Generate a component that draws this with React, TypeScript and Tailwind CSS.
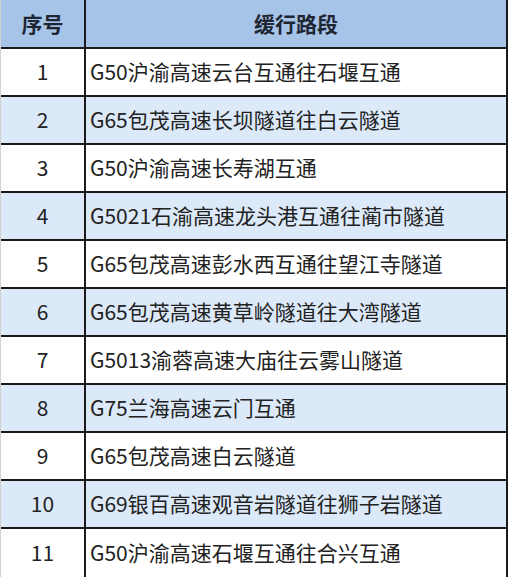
import React from 'react'

const rows = [
  'G50沪渝高速云台互通往石堰互通',
  'G65包茂高速长坝隧道往白云隧道',
  'G50沪渝高速长寿湖互通',
  'G5021石渝高速龙头港互通往蔺市隧道',
  'G65包茂高速彭水西互通往望江寺隧道',
  'G65包茂高速黄草岭隧道往大湾隧道',
  'G5013渝蓉高速大庙往云雾山隧道',
  'G75兰海高速云门互通',
  'G65包茂高速白云隧道',
  'G69银百高速观音岩隧道往狮子岩隧道',
  'G50沪渝高速石堰互通往合兴互通',
]

export default function App() {
  return (
    <div
      className="bg-white w-[509px] h-[577px]"
      style={{ fontFamily: '"Microsoft YaHei", "Noto Sans CJK SC", sans-serif' }}
    >
      <div className="w-[508px] border-l border-l-[#d0d0d0] border-r-2 border-r-[#1b1b1b] border-b-2 border-b-[#1b1b1b]">
        <div className="grid grid-cols-[85px_1fr] h-[49px] bg-[#a6c4e8] border-b-2 border-b-[#1b1b1b]">
          <div className="flex items-center justify-center border-r-2 border-r-[#1b1b1b] text-[21px] font-bold text-[#1f2633]">
            序号
          </div>
          <div className="flex items-center justify-center text-[21px] font-bold text-[#1f2633]">
            缓行路段
          </div>
        </div>
        {rows.map((text, i) => (
          <div
            key={i}
            className={
              'grid grid-cols-[85px_1fr] h-[48px] ' +
              (i % 2 === 1 ? 'bg-[#dce9f8] ' : 'bg-white ') +
              (i < rows.length - 1 ? 'border-b-2 border-b-[#1b1b1b]' : '')
            }
          >
            <div className="flex items-center justify-center border-r-2 border-r-[#1b1b1b] text-[21px] text-[#222222]">
              {i + 1}
            </div>
            <div className="flex items-center pl-[4px] text-[21px] text-[#222222] whitespace-nowrap">
              {text}
            </div>
          </div>
        ))}
      </div>
    </div>
  )
}
